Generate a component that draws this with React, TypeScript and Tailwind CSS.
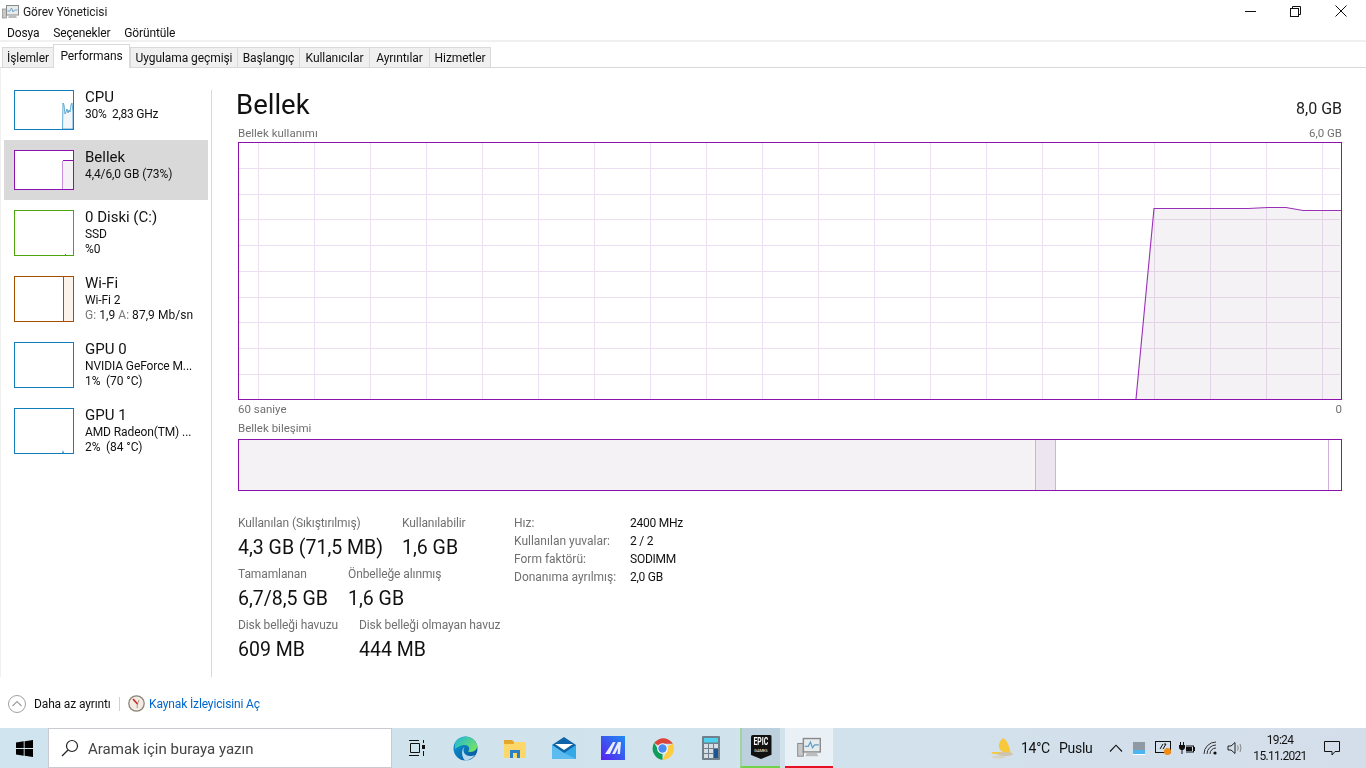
import React from "react";

const tabs = [
  ["İşlemler", "w-[51px]"],
  ["Performans", "w-[77px]"],
  ["Uygulama geçmişi", "w-[107px]"],
  ["Başlangıç", "w-[62px]"],
  ["Kullanıcılar", "w-[70px]"],
  ["Ayrıntılar", "w-[60px]"],
  ["Hizmetler", "w-[62px]"],
];

function AppIcon({ size = 17 }: { size?: number }) {
  return (
    <svg width={size} height={size} viewBox="0 0 17 17">
      <rect x="0.5" y="6" width="4" height="9" fill="#c8c8c8" stroke="#8a8a8a" strokeWidth="0.7" />
      <rect x="4.5" y="2.5" width="12" height="9.5" fill="#e6ebee" stroke="#8a8a8a" />
      <path d="M5.5 8 L8 8 L9.5 5 L11 9 L12.5 7 L15.5 7" fill="none" stroke="#6a9cc4" strokeWidth="0.9" />
      <path d="M7 12.5 H14 L15 15 H6 Z" fill="#bdbdbd" />
    </svg>
  );
}

function Thumb({ kind, color, h }: { kind: string; color: string; h: number }) {
  return (
    <svg width="60" height={h} viewBox={`0 0 60 ${h}`} className="block shrink-0 bg-white">
      {kind === "cpu" && (
        <path d="M48.5 39 L49 13 L50 15 L51 24 L52 22 L53 19 L54 23 L55 20 L56 22 L57 15 L58 13 L59 22 V39 Z" fill="#f1f6fa" stroke="#3f96c9" strokeWidth="0.8" />
      )}
      {kind === "mem" && (
        <g>
          <rect x="49" y="11" width="10" height="28" fill="#f4f2f4" />
          <rect x="48" y="11" width="1" height="28" fill="#c88ddb" />
          <rect x="49" y="10" width="10" height="1" fill="#8b12ae" />
        </g>
      )}
      {kind === "disk" && <rect x="51" y="44" width="1" height="1" fill="#4da60c" />}
      {kind === "wifi" && (
        <g>
          <rect x="49" y="1" width="10" height="44" fill="#fcf3eb" />
          <rect x="49" y="1" width="1" height="44" fill="#a74f01" />
        </g>
      )}
      {kind === "gpu1" && <path d="M48 45 L49 42 L50 45 Z" fill="#117dbb" opacity="0.8" />}
      <rect x="0.5" y="0.5" width="59" height={h - 1} fill="none" stroke={color} />
    </svg>
  );
}

function SideItem({
  title, lines, kind, color, h, selected,
}: { title: string; lines: React.ReactNode[]; kind: string; color: string; h: number; selected?: boolean }) {
  return (
    <div className={`flex items-start pl-[10px] pt-[10px] w-[204px] ${h === 40 ? "h-[60px]" : "h-[66px]"} ${selected ? "bg-[#d9d9d9]" : ""}`}>
      <Thumb kind={kind} color={color} h={h} />
      <div className="ml-[11px] -mt-[2px] text-[#111] whitespace-pre">
        <div className="text-[15px] leading-[18px]">{title}</div>
        <div className="text-[12px] leading-[15px] pt-[1px] tracking-[-0.1px]">
          {lines.map((l, i) => (
            <div key={i} className="h-[15px]">{l}</div>
          ))}
        </div>
      </div>
    </div>
  );
}

function MainChart() {
  const vs = Array.from({ length: 20 }, (_, i) => 19.5 + i * 56.05).filter((x) => x < 1103);
  const hs = Array.from({ length: 9 }, (_, i) => 26 + i * 25.7);
  return (
    <svg width="1104" height="258" viewBox="0 0 1104 258" className="block">
      <rect width="1104" height="258" fill="#fff" />
      {hs.map((y) => (
        <line key={y} x1="1" x2="1102" y1={Math.round(y) + 0.5} y2={Math.round(y) + 0.5} stroke="#eddff2" />
      ))}
      {vs.map((x) => (
        <line key={x} x1={Math.round(x) + 0.5} x2={Math.round(x) + 0.5} y1="1" y2="257" stroke="#eddff2" />
      ))}
      <path d="M898 257 L916 66.5 H1010 L1030 65.5 H1048 L1065 68.5 H1103 V257 Z" fill="#f4f2f4" className="mix-blend-multiply" />
      <path d="M898 257 L916 66.5 H1010 L1030 65.5 H1048 L1065 68.5 H1103" fill="none" stroke="#9a2fb8" strokeWidth="1.1" />
      <rect x="0.5" y="0.5" width="1103" height="257" fill="none" stroke="#8b12ae" />
    </svg>
  );
}

function Stat({ label, value, w }: { label: string; value: string; w: string }) {
  return (
    <div className={w}>
      <div className="text-[12px] leading-[14px] text-[#707070] whitespace-nowrap tracking-[-0.1px]">{label}</div>
      <div className="text-[19.5px] leading-[24px] mt-[6px] text-[#111] whitespace-nowrap">{value}</div>
    </div>
  );
}

function Win() {
  return (
    <svg width="17" height="17" viewBox="0 0 17 17">
      <path d="M0 2.4 L7.7 1.3 V8 H0 Z M8.6 1.2 L17 0 V8 H8.6 Z M0 9 H7.7 V15.7 L0 14.6 Z M8.6 9 H17 V17 L8.6 15.8 Z" fill="#000" />
    </svg>
  );
}

function TaskbarIcons() {
  return (
    <div className="flex h-full items-center">
      {/* task view */}
      <div className="w-[48px] flex justify-center">
        <svg width="17" height="16" viewBox="0 0 17 16" fill="none" stroke="#111">
          <path d="M1 0.5 H11 M1 15.5 H11 M2.5 3.5 H11.5 V12.5 H2.5 Z M15.5 0 V3 M15.5 11 V16" />
          <rect x="14" y="5" width="3" height="4" fill="#111" stroke="none" />
        </svg>
      </div>
      {/* edge */}
      <div className="w-[50px] flex justify-center">
        <svg width="25" height="25" viewBox="0 0 25 25">
          <defs>
            <linearGradient id="e1" x1="0" y1="0" x2="1" y2="1"><stop offset="0" stopColor="#0c9fd8" /><stop offset="1" stopColor="#0a4f9a" /></linearGradient>
            <linearGradient id="e2" x1="0" y1="0" x2="1" y2="0.6"><stop offset="0" stopColor="#1fb6d9" /><stop offset="1" stopColor="#6fe06a" /></linearGradient>
          </defs>
          <circle cx="12.5" cy="12.5" r="12" fill="url(#e1)" />
          <path d="M2 7 C6 -1 20 -2 24 9 C25 14 20 17 15 15.5 C18 12 15 8.5 11 9 C7 9.5 5 11 2 13 Z" fill="url(#e2)" />
          <path d="M11.5 11 C9 14 11 20 17 20 C19 20 21 19.5 22 18.5 C20 22 16 24.5 12 24.5 C9 22 7.5 14 11.5 11 Z" fill="#d6eef7" opacity="0.85" />
        </svg>
      </div>
      {/* explorer */}
      <div className="w-[49px] flex justify-center">
        <svg width="22" height="20" viewBox="0 0 22 20">
          <path d="M0 2 H8 L10 4 H10 V6 H0 Z" fill="#e2a72a" />
          <rect x="0" y="4" width="22" height="16" rx="1" fill="#fcd76a" />
          <rect x="0" y="4" width="10" height="2" fill="#e6a92a" />
          <path d="M6 17 V12 H16 V20 H13 V15 H9 V20 H6 Z" fill="#2c7fc4" />
        </svg>
      </div>
      {/* mail */}
      <div className="w-[49px] flex justify-center">
        <svg width="24" height="22" viewBox="0 0 24 22">
          <path d="M0 8 L12 0 L24 8 V22 H0 Z" fill="#0f63a8" />
          <path d="M0 8 L12 16 L24 8 V22 H0 Z" fill="#35a8e6" />
          <path d="M3 7 H21 L12 13 Z" fill="#fff" />
          <path d="M0 8 L12 16 L24 22 H0 Z" fill="#5cbcf0" />
        </svg>
      </div>
      {/* MA */}
      <div className="w-[49px] flex justify-center">
        <svg width="24" height="24" viewBox="0 0 24 24">
          <defs>
            <linearGradient id="m1" x1="0" y1="1" x2="1" y2="0"><stop offset="0" stopColor="#5a1ff0" /><stop offset="1" stopColor="#1e8cf0" /></linearGradient>
          </defs>
          <rect width="24" height="24" fill="url(#m1)" />
          <path d="M4 18 L12 6 H14.5 L9 18 Z M11 18 L17 6 H20 L19 18 H16.5 L17 12 L14 18 Z" fill="#e8ecff" />
        </svg>
      </div>
      {/* chrome */}
      <div className="w-[50px] flex justify-center">
        <svg width="23" height="23" viewBox="0 0 24 24">
          <path d="M12 12 L3.3 6 A12 12 0 0 1 22.9 7 L12 7 Z" fill="#db4437" />
          <path d="M12 12 L12 24 A12 12 0 0 1 3.3 6 L8 14 Z" fill="#0f9d58" />
          <path d="M12 12 L22.9 7 A12 12 0 0 1 12 24 L16.5 14.5 Z" fill="#ffcd40" />
          <circle cx="12" cy="12" r="5.6" fill="#fff" />
          <circle cx="12" cy="12" r="4.4" fill="#4a8af4" />
        </svg>
      </div>
      {/* calculator */}
      <div className="w-[48px] flex justify-center">
        <svg width="18" height="24" viewBox="0 0 18 24">
          <rect width="18" height="24" rx="1" fill="#6f7f8c" />
          <rect x="2" y="2" width="14" height="4.5" fill="#4fd0ee" />
          <g fill="#d7dfe5">
            <rect x="2" y="8" width="4" height="4" /><rect x="7" y="8" width="4" height="4" /><rect x="12" y="8" width="4" height="4" />
            <rect x="2" y="13" width="4" height="4" /><rect x="7" y="13" width="4" height="4" />
            <rect x="2" y="18" width="4" height="4" /><rect x="7" y="18" width="4" height="4" />
          </g>
          <rect x="12" y="13" width="4" height="9" fill="#1d5590" />
        </svg>
      </div>
      {/* epic */}
      <div className="w-[40px] ml-[5px] h-full bg-[#bcd0dd] border-b-[2px] border-b-[#6ed24a] border-l-[2px] border-l-[#9fd39f] flex justify-center items-center">
        <div className="w-[21px] h-[24px] bg-[#111] text-white flex flex-col items-center rounded-t-[2px] [clip-path:polygon(0_0,100%_0,100%_82%,50%_100%,0_82%)]">
          <span className="text-[11px] leading-[12px] font-bold mt-[1px] scale-x-[0.62]">EPIC</span>
          <span className="text-[4px] leading-[5px]">GAMES</span>
        </div>
      </div>
      {/* task manager */}
      <div className="w-[48px] ml-[5px] h-full bg-[#e9f0f6] border-b-[2px] border-b-[#e81123] flex justify-center items-center">
        <AppIcon size={24} />
      </div>
    </div>
  );
}

function Tray() {
  return (
    <div className="flex items-center h-full ml-auto text-[#111]">
      <svg width="24" height="22" viewBox="0 0 24 22" className="mr-[7px]">
        <path d="M13 1 C8 5 7 12 13 15 L3 15 C1 15 1 16 3 17 H21 C19 9 18 4 13 1 Z" fill="#f7c83a" />
        <ellipse cx="15" cy="17" rx="8" ry="2" fill="#cfc4ae" />
        <ellipse cx="9" cy="20" rx="7" ry="1.5" fill="#d8d2c2" />
      </svg>
      <span className="text-[14px] w-[38px] tracking-[-0.3px]">14°C</span>
      <span className="text-[14px] w-[50px] tracking-[-0.3px]">Puslu</span>
      <svg width="14" height="8" viewBox="0 0 14 8" fill="none" stroke="#111" strokeWidth="1.1" className="mr-[10px]"><path d="M1 7.5 L7 1.2 L13 7.5" /></svg>
      <div className="w-[12px] h-[13px] bg-[#8f9aa3] mr-[10px] flex flex-col justify-end"><div className="h-[5px] bg-[#4ab5ee] border-b border-white" /></div>
      <svg width="17" height="16" viewBox="0 0 17 16" fill="none" className="mr-[7px]">
        <rect x="0.5" y="1.5" width="15" height="11" stroke="#111" />
        <path d="M5 9 L8 4 M9 4 L11 4 L8 9" stroke="#111" />
        <circle cx="12.5" cy="11.5" r="3.5" fill="#f58c12" />
      </svg>
      <svg width="16" height="13" viewBox="0 0 16 13" className="mr-[8px]" fill="#111">
        <path d="M1 0 V3 H0 V5 C0 7 1 8 2.5 8 V12 H3.5 V8 C5 8 6 7 6 5 V3 H5 V0 H4 V3 H2 V0 Z" />
        <path d="M7 3.5 H15 V5 H16 V9 H15 V10.5 H7 V9.5 H14 V4.5 H7 Z" />
        <rect x="7" y="5" width="6" height="4" />
      </svg>
      <svg width="16" height="14" viewBox="0 0 16 14" fill="none" stroke="#333" className="mr-[8px]">
        <path d="M1 13 A12 12 0 0 1 13 1" /><path d="M4 13 A9 9 0 0 1 13 4" /><path d="M7 13 A6 6 0 0 1 13 7" />
        <circle cx="12" cy="12" r="1.6" fill="#111" stroke="none" />
      </svg>
      <svg width="16" height="14" viewBox="0 0 16 14" fill="none" stroke="#222" className="mr-[6px]">
        <path d="M1 5 H4 L8 1.5 V12.5 L4 9 H1 Z" />
        <path d="M10.5 4.5 Q12 7 10.5 9.5 M13 3 Q15 7 13 11" stroke="#888" />
      </svg>
      <div className="w-[62px] text-center text-[12px] leading-[16px] mr-[13px] tracking-[-0.7px]">
        <div>19:24</div>
        <div>15.11.2021</div>
      </div>
      <svg width="16" height="15" viewBox="0 0 16 15" fill="none" stroke="#111" className="mr-[26px]">
        <path d="M0.5 0.5 H15.5 V10.5 H11 L8 14 V10.5 H0.5 Z" />
      </svg>
    </div>
  );
}

export default function App() {
  return (
    <div className="w-[1366px] h-[768px] overflow-hidden flex flex-col bg-white text-black font-['Roboto','Noto_Sans',sans-serif]">
      {/* title bar */}
      <div className="h-[22px] flex items-center pl-[2px] shrink-0">
        <AppIcon />
        <span className="ml-[4px] text-[12px] text-[#222] tracking-[-0.1px] pt-[1px]">Görev Yöneticisi</span>
        <div className="ml-auto flex items-center h-full">
          <svg width="11" height="1" viewBox="0 0 11 1" className="mr-[34px]"><rect width="11" height="1" fill="#111" /></svg>
          <svg width="11" height="11" viewBox="0 0 11 11" fill="none" stroke="#111" className="mr-[34px]">
            <rect x="0.5" y="2.5" width="8" height="8" /><path d="M2.5 2.5 V0.5 H10.5 V8.5 H8.5" />
          </svg>
          <svg width="12" height="12" viewBox="0 0 12 12" fill="none" stroke="#111" className="mr-[19px]"><path d="M0.5 0.5 L11.5 11.5 M11.5 0.5 L0.5 11.5" /></svg>
        </div>
      </div>
      {/* menu */}
      <div className="h-[20px] flex items-center pl-[7px] gap-[14px] text-[12px] text-[#111] shrink-0 border-b-[2px] border-b-[#f0f0f0] pt-[3px] tracking-[-0.15px]">
        <span>Dosya</span><span>Seçenekler</span><span>Görüntüle</span>
      </div>
      {/* tabs */}
      <div className="h-[26px] flex items-end pl-[2px] border-b border-b-[#d9d9d9] shrink-0 tracking-[-0.08px]">
        {tabs.map(([t, w], i) =>
          i === 1 ? (
            <div key={t} className={`${w} h-[24px] -mb-px bg-white border border-[#d9d9d9] border-b-0 text-[12px] flex items-center justify-center text-[#111] pb-[1px]`}>{t}</div>
          ) : (
            <div key={t} className={`${w} h-[20px] bg-[#f0f0f0] border-t border-l border-[#d9d9d9] text-[12px] flex items-center justify-center text-[#111] ${i === 6 ? "border-r" : ""}`}>{t}</div>
          )
        )}
      </div>
      {/* main */}
      <div className="flex h-[609px] shrink-0 border-l border-l-[#f0f0f0]">
        <aside className="w-[210px] pt-[12px] pl-[3px] shrink-0">
          <SideItem title="CPU" kind="cpu" color="#117dbb" h={40} lines={[<span key="c" className="tracking-[-0.25px]">30%  2,83 GHz</span>]} />
          <SideItem title="Bellek" kind="mem" color="#8b12ae" h={40} selected lines={["4,4/6,0 GB (73%)"]} />
          <SideItem title="0 Diski (C:)" kind="disk" color="#4da60c" h={46} lines={["SSD", "%0"]} />
          <SideItem title="Wi-Fi" kind="wifi" color="#a74f01" h={46} lines={["Wi-Fi 2", <span key="g" className="tracking-[0.05px]"><span className="text-[#777]">G:</span> 1,9 <span className="text-[#777]">A:</span> 87,9 Mb/sn</span>]} />
          <SideItem title="GPU 0" kind="gpu0" color="#117dbb" h={46} lines={["NVIDIA GeForce M...", "1%  (70 °C)"]} />
          <SideItem title="GPU 1" kind="gpu1" color="#117dbb" h={46} lines={["AMD Radeon(TM) ...", "2%  (84 °C)"]} />
        </aside>
        <div className="w-px bg-[#d9d9d9] mt-[22px] shrink-0" />
        <section className="flex-1 pl-[26px] pr-[24px] pt-[22px]">
          <div className="h-[36px] flex justify-between">
            <span className="text-[27.5px] leading-[30px] -ml-[2px] text-[#111]">Bellek</span>
            <span className="text-[16px] leading-[18px] mt-[10px] text-[#222]">8,0 GB</span>
          </div>
          <div className="h-[16px] flex justify-between text-[11.5px] leading-[14px] text-[#707070]">
            <span>Bellek kullanımı</span><span>6,0 GB</span>
          </div>
          <MainChart />
          <div className="h-[21px] pt-[2px] flex justify-between text-[11.5px] leading-[14px] text-[#707070]">
            <span>60 saniye</span><span>0</span>
          </div>
          <div className="h-[18px] text-[11.5px] leading-[14px] text-[#707070]">Bellek bileşimi</div>
          <div className="h-[52px] w-[1104px] border border-[#8b12ae] flex">
            <div className="w-[797px] bg-[#f4f2f4] border-r border-r-[#d2b0dc]" />
            <div className="w-[20px] bg-[#ede6f1] border-r border-r-[#d2b0dc]" />
            <div className="w-[273px] border-r border-r-[#d2b0dc]" />
          </div>
          <div className="flex mt-[25px]">
            <div className="w-[276px] shrink-0 flex flex-col gap-[7px]">
              <div className="flex">
                <Stat w="w-[164px]" label="Kullanılan (Sıkıştırılmış)" value="4,3 GB (71,5 MB)" />
                <Stat w="w-[100px]" label="Kullanılabilir" value="1,6 GB" />
              </div>
              <div className="flex">
                <Stat w="w-[110px]" label="Tamamlanan" value="6,7/8,5 GB" />
                <Stat w="w-[120px]" label="Önbelleğe alınmış" value="1,6 GB" />
              </div>
              <div className="flex">
                <Stat w="w-[121px]" label="Disk belleği havuzu" value="609 MB" />
                <Stat w="w-[150px]" label="Disk belleği olmayan havuz" value="444 MB" />
              </div>
            </div>
            <div className="-mt-[2px] text-[12px] leading-[18px] grid grid-cols-[116px_auto] h-fit">
              {[
                ["Hız:", "2400 MHz"],
                ["Kullanılan yuvalar:", "2 / 2"],
                ["Form faktörü:", "SODIMM"],
                ["Donanıma ayrılmış:", "2,0 GB"],
              ].map(([a, b]) => (
                <React.Fragment key={a}>
                  <span className="text-[#707070] whitespace-nowrap">{a}</span>
                  <span className="text-[#111] whitespace-nowrap tracking-[-0.25px]">{b}</span>
                </React.Fragment>
              ))}
            </div>
          </div>
        </section>
      </div>
      {/* footer */}
      <div className="h-[51px] flex items-center pl-[8px] pt-[2px] shrink-0 tracking-[-0.13px]">
        <svg width="18" height="18" viewBox="0 0 18 18" fill="none" stroke="#a0a0a0">
          <circle cx="9" cy="9" r="8.5" /><path d="M4.5 11 L9 6.5 L13.5 11" strokeWidth="1.2" />
        </svg>
        <span className="ml-[8px] text-[12px] w-[85px] text-[#111] whitespace-nowrap">Daha az ayrıntı</span>
        <div className="w-px h-[14px] bg-[#d0d0d0]" />
        <svg width="17" height="17" viewBox="0 0 17 17" className="ml-[8px]">
          <circle cx="8.5" cy="8.5" r="7.7" fill="#f4ece4" stroke="#8a8378" strokeWidth="1.3" />
          <path d="M5 4 L9.5 9" stroke="#c8281e" strokeWidth="1.6" />
          <path d="M11 5 L9.5 9 L9 13" stroke="#777" strokeWidth="0.7" fill="none" />
        </svg>
        <span className="ml-[4px] text-[12px] text-[#0066cc] whitespace-nowrap">Kaynak İzleyicisini Aç</span>
      </div>
      {/* taskbar */}
      <div className="h-[40px] flex items-center shrink-0 bg-gradient-to-r from-[#cfe4ee] via-[#d1e3ec] to-[#d4deea]">
        <div className="w-[48px] flex justify-center"><Win /></div>
        <div className="w-[344px] h-full bg-white border border-[#c8ccd0] flex items-center pl-[12px]">
          <svg width="18" height="18" viewBox="0 0 18 18" fill="none" stroke="#222" strokeWidth="1.2">
            <circle cx="11" cy="7" r="5.5" /><path d="M7 11 L1 17" />
          </svg>
          <span className="ml-[9px] text-[15px] pt-[3px] text-[#444] whitespace-nowrap">Aramak için buraya yazın</span>
        </div>
        <TaskbarIcons />
        <Tray />
      </div>
    </div>
  );
}
